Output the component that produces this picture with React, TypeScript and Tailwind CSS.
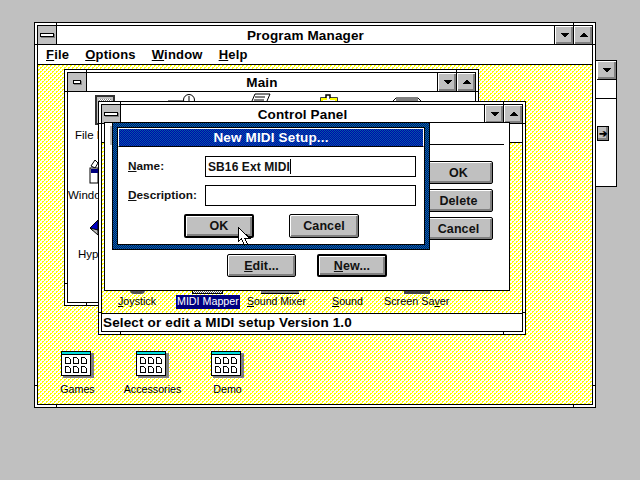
import type { ReactNode } from "react";

const sans = "font-['Liberation_Sans',Arial,sans-serif]";
const raised = "bg-[#c0c0c0] shadow-[inset_1px_1px_0_#fff,inset_-2px_-2px_0_#808080]";

// little notches the Win 3.1 resize frame has near each corner
function Ticks() {
  const spots = [
    "left-[21px] top-0 w-px h-[3px]",
    "right-[21px] top-0 w-px h-[3px]",
    "left-[21px] bottom-0 w-px h-[3px]",
    "right-[21px] bottom-0 w-px h-[3px]",
    "left-0 top-[21px] w-[3px] h-px",
    "right-0 top-[21px] w-[3px] h-px",
    "left-0 bottom-[21px] w-[3px] h-px",
    "right-0 bottom-[21px] w-[3px] h-px",
  ];
  return (
    <>
      {spots.map((s) => (
        <span key={s} className={`absolute bg-black ${s}`} />
      ))}
    </>
  );
}

function Arrow({ dir }: { dir: "up" | "down" }) {
  const pts = dir === "up" ? "4,0 5,0 9,4 0,4" : "0,0 9,0 5,4 4,4";
  return (
    <svg width="9" height="5" viewBox="0 0 9 5" shapeRendering="crispEdges">
      <polygon points={pts} fill="#000" />
    </svg>
  );
}

function CapButton({ dir }: { dir: "up" | "down" }) {
  return (
    <div className={`w-[19px] h-full flex items-center justify-center border-l border-black ${raised}`}>
      <Arrow dir={dir} />
    </div>
  );
}

function SysMenu({ bar }: { bar: string }) {
  return (
    <div className="w-[19px] h-full shrink-0 border-r border-black bg-[#c0c0c0] flex items-center justify-center">
      <span className={`border border-black bg-white shadow-[1px_1px_0_#808080] ${bar}`} />
    </div>
  );
}

function Window({
  title,
  pos,
  bar,
  children,
}: {
  title: string;
  pos: string;
  bar: string;
  children: ReactNode;
}) {
  return (
    <div className={`absolute border border-black bg-white p-[2px] ${pos}`}>
      <Ticks />
      <div className="border border-black h-full flex flex-col">
        <div className="h-[19px] shrink-0 flex border-b border-black bg-white">
          <SysMenu bar={bar} />
          <div className={`flex-1 text-center text-[13.5px] leading-[19px] font-bold tracking-[0.15px] text-black ${sans}`}>
            {title}
          </div>
          <CapButton dir="down" />
          <CapButton dir="up" />
        </div>
        {children}
      </div>
    </div>
  );
}

function Btn({ label, mark, size, isDefault }: { label: string; mark?: string; size: string; isDefault?: boolean }) {
  return (
    <div
      className={`flex items-center justify-center shrink-0 pt-[1px] rounded-[2px] border-black text-[12.5px] tracking-[0.1px] font-bold text-[#111] ${raised} ${sans} ${
        isDefault ? "border-2" : "border"
      } ${size}`}
    >
      {mark ? <span className="underline">{mark}</span> : null}
      {label}
    </div>
  );
}

function GroupIcon() {
  return (
    <svg width="33" height="27" viewBox="0 0 33 27" shapeRendering="crispEdges">
      <rect x="2" y="2" width="31" height="25" fill="#808080" />
      <rect x="0.5" y="0.5" width="29" height="24" fill="#fff" stroke="#000" />
      <rect x="1" y="1" width="28" height="2" fill="#00e0e0" />
      <line x1="0" y1="3.5" x2="30" y2="3.5" stroke="#000" />
      {[6, 15].map((y) =>
        [4, 12, 20].map((x) => (
          <path key={`${x}-${y}`} d={`M${x + 0.5} ${y + 0.5}h3l2 2v4h-5z`} fill="#fff" stroke="#000" />
        ))
      )}
    </svg>
  );
}

function Caption({ children, size = "text-[10.7px]" }: { children: ReactNode; size?: string }) {
  return <span className={`block whitespace-nowrap leading-[13px] text-black ${size} ${sans}`}>{children}</span>;
}

function Group({ name }: { name: string }) {
  return (
    <div className="w-[75px] flex flex-col items-center gap-[5px]">
      <GroupIcon />
      <Caption>{name}</Caption>
    </div>
  );
}

// staggered yellow pixels on white, four conic layers make the dots
const YELLOW =
  "bg-white bg-[conic-gradient(at_2px_1px,transparent_0_75%,#ffff00_0),conic-gradient(at_2px_1px,transparent_0_75%,#ffff00_0),conic-gradient(at_1px_2px,transparent_0_75%,#ffff00_0),conic-gradient(at_1px_2px,transparent_0_75%,#ffff00_0)] bg-[length:4px_4px] bg-[position:0_0,2px_2px,0_0,2px_2px]";
const BORDER_DITHER =
  "bg-[repeating-conic-gradient(#000080_0_25%,#008090_0_50%)] bg-[length:2px_2px]";
const TITLE_DITHER =
  "bg-[repeating-conic-gradient(#0000b0_0_25%,#0060a0_0_50%)] bg-[length:2px_2px]";

export default function App() {
  return (
    <div className={`relative w-[640px] h-[480px] overflow-hidden bg-[#c0c0c0] ${sans}`}>
      {/* window peeking out behind Program Manager */}
      <div className="absolute left-[500px] top-[60px] w-[117px] h-[127px] border border-black bg-white flex flex-col items-end">
        <div className={`w-[19px] h-[19px] border-b border-black flex items-center justify-center ${raised}`}>
          <Arrow dir="down" />
        </div>
        <div className="w-[20px] h-[19px] border-b border-black" />
        <div className="w-[19px] mt-[27px] flex justify-start">
          <div className="w-[12px] h-[15px] border border-black bg-[#c0c0c0] flex items-center justify-center text-[10px] font-bold leading-none shadow-[inset_-2px_-2px_0_#808080]">
            ➔
          </div>
        </div>
      </div>

      <Window title="Program Manager" pos="left-[34px] top-[22px] w-[562px] h-[386px]" bar="w-[14px] h-[4px]">
        <div className="h-[20px] shrink-0 border-b border-black bg-white flex gap-[16px] pl-[8px] text-[13px] tracking-[0.2px] leading-[19px] font-bold text-black">
          <span><span className="underline">F</span>ile</span>
          <span><span className="underline">O</span>ptions</span>
          <span><span className="underline">W</span>indow</span>
          <span><span className="underline">H</span>elp</span>
        </div>
        <div className={`flex-1 flex items-end pl-[2px] pb-[8px] ${YELLOW}`}>
          <Group name="Games" />
          <Group name="Accessories" />
          <Group name="Demo" />
        </div>
      </Window>

      <Window title="Main" pos="left-[64px] top-[69px] w-[415px] h-[237px]" bar="w-[8px] h-[4px]">
        <div className="flex-1 bg-white" />
      </Window>

      {/* Main's icons, only slivers of them show */}
      <div className="absolute left-[95px] top-[95px] w-[20px] h-[30px] border-2 border-[#333] bg-[#c0c0c0]">
        <div className="h-[4px] mt-[2px] mx-[2px] bg-[repeating-conic-gradient(#808080_0_25%,#ffffff_0_50%)] bg-[length:2px_2px]" />
      </div>
      <svg className="absolute left-[165px] top-[92px]" width="280" height="10" viewBox="0 0 280 10" fill="none" stroke="#000">
        <path d="M3 9.5H18" strokeWidth="2" />
        <circle cx="24" cy="8" r="5.5" fill="#fff" />
        <path d="M24 4v5" />
        <path d="M87 9l3-7h15l-3 7M90 5h10M89 8h10" />
        <path d="M156 10V6h5V3h4v3h7v4" strokeWidth="1.5" />
        <path d="M157 10V7h5M165 7h6v3" stroke="#ffff00" strokeWidth="2" />
        <path d="M228 9l3-3h22l3 3" />
        <path d="M231 8h22" stroke="#808080" strokeWidth="2" />
      </svg>
      <span className="absolute left-[75px] top-[129px]"><Caption size="text-[11.5px]">File Manager</Caption></span>
      <span className="absolute left-[68px] top-[189px]"><Caption size="text-[11.5px]">Windows</Caption></span>
      <span className="absolute left-[78px] top-[248px]"><Caption size="text-[11.5px]">Hypertext</Caption></span>
      <svg className="absolute left-[88px] top-[158px]" width="10" height="26" viewBox="0 0 10 26">
        <path d="M3 8l4-6 3 3-3 5z" fill="#fff" stroke="#000" />
        <rect x="2" y="10" width="8" height="15" fill="#fff" stroke="#000" />
        <rect x="3" y="11" width="7" height="4" fill="#000080" />
      </svg>
      <svg className="absolute left-[90px] top-[220px]" width="9" height="17" viewBox="0 0 9 17">
        <path d="M0 8L8 0v10H2z" fill="#0000c0" stroke="#000" />
        <path d="M0 8l8 7v-5z" fill="#c0c0c0" stroke="#000" />
      </svg>

      <Window title="Control Panel" pos="left-[98px] top-[101px] w-[428px] h-[234px]" bar="w-[14px] h-[4px]">
        <div className="h-[19px] shrink-0 border-b border-black bg-white" />
        <div className={`flex-1 pb-[4px] pl-[16px] grid grid-cols-[58px_71px_85px_52px_auto] content-end ${YELLOW}`}>
          {/* applet icon slivers sit just above each caption */}
          <div>
            <div className="ml-[12px] w-[15px] h-[4px] rounded-b-full bg-[#555]" />
            <div className="mt-[1px]"><Caption><span className="underline">J</span>oystick</Caption></div>
          </div>
          <div>
            <div className="ml-[16px] w-[31px] h-[4px] border border-black bg-[repeating-conic-gradient(#555_0_25%,#ffffff_0_50%)] bg-[length:2px_2px]" />
            <div className="mt-[1px] mr-[7px] h-[14px] bg-[#000080] overflow-hidden pl-[1px] text-white text-[10.7px] leading-[13px] whitespace-nowrap">
              MIDI Mapper
            </div>
          </div>
          <div>
            <div className="ml-[14px] w-[38px] h-[4px] bg-[#808080] border-b border-black" />
            <div className="mt-[1px]"><Caption size="text-[10.5px]"><span className="underline">S</span>ound Mixer</Caption></div>
          </div>
          <div className="pt-[5px]"><Caption><span className="underline">S</span>ound</Caption></div>
          <div>
            <div className="ml-[20px] w-[26px] h-[4px] bg-[#444]" />
            <div className="mt-[1px]"><Caption size="text-[10.8px]">Screen Sa<span className="underline">v</span>er</Caption></div>
          </div>
        </div>
        <div className="h-[18px] shrink-0 border-t border-black bg-white pl-[1px] text-[13.5px] leading-[18px] font-bold tracking-[0.15px] text-black whitespace-nowrap">
          Select or edit a MIDI setup Version 1.0
        </div>
      </Window>

      {/* MIDI Mapper applet, sits under the dialog */}
      <div className="absolute left-[104px] top-[122px] w-[406px] h-[169px] border border-black bg-white">
        <div className="absolute left-[5px] top-[3px] w-[3px] h-[19px] bg-[#c0c0c0]" />
        <div className="ml-[300px] mr-[5px] mt-[21px] h-px bg-black" />
        <div className="ml-[319px] mt-[16px] flex flex-col gap-[5px]">
          <Btn label="OK" size="w-[69px] h-[23px]" />
          <Btn label="Delete" size="w-[69px] h-[23px]" />
          <Btn label="Cancel" size="w-[69px] h-[23px]" />
        </div>
        <div className="ml-[122px] mt-[14px] flex gap-[21px]">
          <Btn mark="E" label="dit..." size="w-[69px] h-[23px]" />
          <Btn mark="N" label="ew..." size="w-[70px] h-[23px]" isDefault />
        </div>
      </div>

      {/* New MIDI Setup dialog */}
      <div className={`absolute left-[112px] top-[122px] w-[318px] h-[128px] border border-black p-[4px] flex flex-col ${BORDER_DITHER}`}>
        <div className="flex-1 flex flex-col border border-black bg-white">
          <div className={`h-[19px] shrink-0 border border-white border-b-black text-center text-[13.5px] leading-[17px] font-bold tracking-[0.15px] text-white ${TITLE_DITHER}`}>
            New MIDI Setup...
          </div>
          <div className="flex-1 flex flex-col pl-[10px] pt-[9px] text-[11.8px] font-bold text-[#111]">
            <div className="flex items-center h-[21px]">
              <span className="w-[77px] pt-[1px]"><span className="underline">N</span>ame:</span>
              <div className="w-[211px] h-[21px] border border-black pl-[2px] leading-[21px] text-[12px] tracking-[0.1px]">
                SB16 Ext MIDI<span className="inline-block w-px h-[15px] bg-black align-[-3px]" />
              </div>
            </div>
            <div className="flex items-center h-[21px] mt-[8px]">
              <span className="w-[77px] pt-[1px]"><span className="underline">D</span>escription:</span>
              <div className="w-[211px] h-[21px] border border-black" />
            </div>
            <div className="flex mt-[8px] ml-[56px] gap-[35px]">
              <Btn label="OK" size="w-[70px] h-[24px]" isDefault />
              <Btn label="Cancel" size="w-[70px] h-[24px]" />
            </div>
          </div>
        </div>
      </div>

      {/* mouse pointer */}
      <svg className="absolute left-[237px] top-[226px]" width="16" height="21" viewBox="0 0 16 21" shapeRendering="crispEdges">
        <path d="M1.5 1.5v14l3-3 3 6.5 3-1-3-6h5z" fill="#fff" stroke="#000" />
      </svg>
    </div>
  );
}
